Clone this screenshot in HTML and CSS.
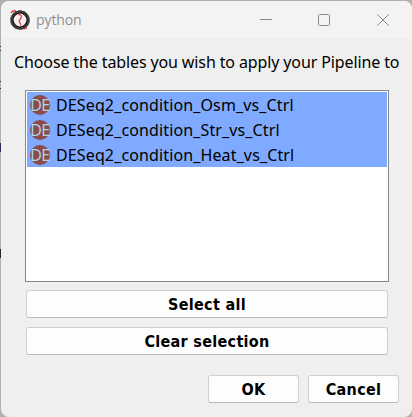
FILE: index.html
```html
<!DOCTYPE html>
<html lang="en">
<head>
<meta charset="utf-8">
<title>python</title>
<link rel="stylesheet" href="styles.css">
</head>
<body>
<main class="window">
  <header class="titlebar">
    <svg class="app-icon" width="20" height="20" viewBox="0 0 20 20" fill="none">
      <circle cx="10" cy="10" r="8" fill="#f6eeee" stroke="#111" stroke-width="3.2"/>
      <circle cx="10" cy="10" r="9.4" stroke="#555" stroke-width="1" stroke-dasharray="4 2"/>
      <circle cx="10" cy="10" r="8.200" stroke="#999" stroke-width=".5"/>
      <path d="M1 3.200 2.500 1.200 6 .8M13.500 19l3.500-1.400" stroke="#e23a44" stroke-width="1.400"/>
      <path d="M8 4.500c2-.5 4 .8 3.300 2.800S9 9.500 9.200 11.200s2.300 2.500 1.300 4.300" stroke="#e44a54" stroke-width="1.400"/>
    </svg>
    <span class="title">python</span>
    <svg class="controls" width="132" height="14" viewBox="0 0 132 14" fill="none" stroke="#8c8c8c">
      <path d="M1 6.500h12"/>
      <rect x="59.500" y="1.500" width="11" height="11" rx="1"/>
      <path d="m118.300 1.300 11.400 11.400m0-11.400-11.400 11.400"/>
    </svg>
  </header>
  <div class="content">
    <p class="prompt"><span>Choose the tables you wish to apply your Pipeline to</span></p>
    <ul class="list">
      <li><span class="badge">DE</span><span class="name">DESeq2_condition_Osm_vs_Ctrl</span></li>
      <li><span class="badge">DE</span><span class="name">DESeq2_condition_Str_vs_Ctrl</span></li>
      <li><span class="badge">DE</span><span class="name">DESeq2_condition_Heat_vs_Ctrl</span></li>
    </ul>
    <button class="wide">Select all</button>
    <button class="wide">Clear selection</button>
    <div class="actions">
      <button>OK</button>
      <button>Cancel</button>
    </div>
  </div>
</main>
</body>
</html>
```
FILE: styles.css
```css
* { box-sizing: border-box; }
body {
  margin: 0;
  height: 417px;
  padding: 1px 0 0 1px;
  overflow: hidden;
  background:
    linear-gradient(#302c60, #302c60) 0 143px / 1px 9px no-repeat,
    linear-gradient(#292929, #292929) 0 249px / 1px 9px no-repeat,
    linear-gradient(#333, #333) 0 46px / 1px 1px no-repeat,
    linear-gradient(#333, #333) 0 50px / 1px 1px no-repeat,
    linear-gradient(#333, #333) 0 81px / 1px 1px no-repeat,
    linear-gradient(#333, #333) 0 88px / 1px 1px no-repeat,
    #b0b0b0;
  font-family: "Noto Sans", sans-serif;
  font-size: 16px;
  color: #000;
}
.window {
  height: 416px;
  background: #efefef;
  border-radius: 8px;
  overflow: hidden;
}
.titlebar {
  display: flex;
  align-items: center;
  height: 37px;
  padding: 0 21px 0 9px;
  background: #f3f3f3;
}
.title {
  margin-left: 6px;
  font: 14px/20px "Open Sans", sans-serif;
  letter-spacing: -.1px;
  color: #919191;
}
.controls { margin-left: auto; }
.content { padding: 0 11px 0 12px; }
.prompt {
  margin: 0;
  height: 52px;
  padding: 14px 0 0 1px;
  line-height: 20px;
  white-space: nowrap;
  letter-spacing: -.12px;
}
.list {
  list-style: none;
  margin: 0 12px 8px;
  padding: 1px;
  height: 192px;
  border: 1px solid #828790;
  background: #fff;
}
.list li {
  display: flex;
  align-items: center;
  height: 25px;
  padding-left: 3px;
  background: #7faaff;
}
.badge {
  width: 20px;
  height: 20px;
  border-radius: 50%;
  background: #8b4b4a;
  color: #add8e6;
  font: 16px/20px "Open Sans", sans-serif;
  letter-spacing: -.4px;
  display: flex;
  justify-content: center;
}
.name { margin-left: 6px; line-height: 24px; white-space: nowrap; letter-spacing: .13px; }
button {
  display: block;
  height: 28px;
  padding: 2px 0 0;
  border: 1px solid #d0d0d0;
  border-bottom-color: #b9b9b9;
  border-radius: 3px;
  background: #fdfdfd;
  color: #000;
  font: bold 16px/24px "DejaVu Sans Condensed", "DejaVu Sans", sans-serif;
  font-stretch: condensed;
  letter-spacing: .3px;
}
.wide { width: 362px; margin: 0 0 9px 13px; }
.actions {
  display: flex;
  justify-content: flex-end;
  gap: 9px;
  margin: 20px 2px 0 0;
}
.actions button { width: 91px; }
```
